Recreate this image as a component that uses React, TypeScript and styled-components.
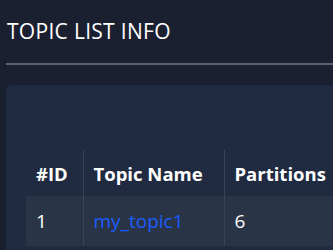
import React from "react";
import styled, { createGlobalStyle } from "styled-components";

const GlobalStyle = createGlobalStyle`
    html, body {
        margin: 0;
        padding: 0;
        background: #1b2030;
        overflow: hidden;
    }
    body {
        font-family: "Open Sans", "Noto Sans", sans-serif;
        color: #ffffff;
    }
`;

type Topic = { id: number; name: string; partitions: number };

const topics: Topic[] = [{ id: 1, name: "my_topic1", partitions: 6 }];

export default function App() {
    return (
        <>
            <GlobalStyle />
            <Page>
                <Title>TOPIC LIST INFO</Title>
                <Divider />
                <Panel>
                    <Table>
                        <thead>
                            <tr>
                                <HeadCell $width={57}>#ID</HeadCell>
                                <HeadCell $width={141}>Topic Name</HeadCell>
                                <HeadCell $width={160}>Partitions</HeadCell>
                            </tr>
                        </thead>
                        <tbody>
                            {topics.map((topic) => (
                                <Row key={topic.id}>
                                    <Cell>{topic.id}</Cell>
                                    <Cell>
                                        <TopicLink href="#">{topic.name}</TopicLink>
                                    </Cell>
                                    <Cell>{topic.partitions}</Cell>
                                </Row>
                            ))}
                        </tbody>
                    </Table>
                </Panel>
            </Page>
        </>
    );
}

// STYLES
const Page = styled.div`
    width: 560px;
    padding: 0 0 0 6px;
`;

const Title = styled.h1`
    margin: 0;
    padding: 17px 0 0 1px;
    font-size: 21px;
    font-weight: 400;
    line-height: 29px;
    letter-spacing: 0.3px;
`;

const Divider = styled.div`
    height: 2px;
    margin-top: 17px;
    background: #5b606e;
`;

const Panel = styled.div`
    margin-top: 20px;
    padding: 65px 0 20px 20px;
    background: #202a40;
    border-radius: 6px;
`;

const Table = styled.table`
    border-collapse: collapse;
    table-layout: fixed;
`;

const HeadCell = styled.th<{ $width: number }>`
    width: ${(p) => p.$width}px;
    height: 46px;
    padding: 0 10px;
    box-sizing: border-box;
    text-align: left;
    font-size: 18.5px;
    font-weight: 700;
    border-left: 1px solid #3a4356;

    &:first-child {
        border-left: none;
    }
`;

const Row = styled.tr`
    background: #2a3447;
`;

const Cell = styled.td`
    height: 50px;
    padding: 0 10px;
    box-sizing: border-box;
    font-size: 19px;
    border-left: 1px solid #3a4356;

    &:first-child {
        border-left: none;
    }
`;

const TopicLink = styled.a`
    color: #1a5cff;
    text-decoration: none;
`;
